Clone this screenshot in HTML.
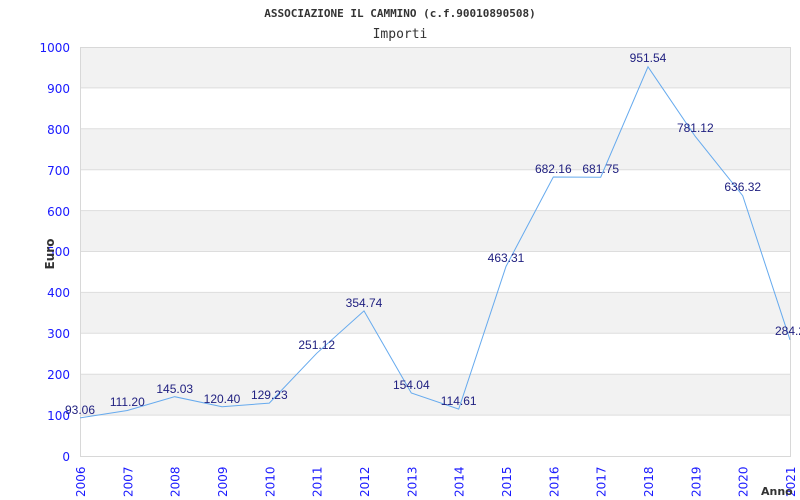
<!DOCTYPE html>
<html><head><style>body{margin:0;background:#fff;overflow:hidden}svg{display:block}</style></head><body>
<svg width="800" height="500" xmlns="http://www.w3.org/2000/svg">
<rect width="800" height="500" fill="#fff"/>
<g fill="#f2f2f2">
<rect x="80" y="47" width="710" height="40.9"/>
<rect x="80" y="128.8" width="710" height="40.9"/>
<rect x="80" y="210.6" width="710" height="40.9"/>
<rect x="80" y="292.4" width="710" height="40.9"/>
<rect x="80" y="374.2" width="710" height="40.9"/>
</g>
<g stroke="#dddddd" stroke-width="1">
<line x1="80" x2="790" y1="87.9" y2="87.9"/><line x1="80" x2="790" y1="128.8" y2="128.8"/>
<line x1="80" x2="790" y1="169.7" y2="169.7"/><line x1="80" x2="790" y1="210.6" y2="210.6"/>
<line x1="80" x2="790" y1="251.5" y2="251.5"/><line x1="80" x2="790" y1="292.4" y2="292.4"/>
<line x1="80" x2="790" y1="333.3" y2="333.3"/><line x1="80" x2="790" y1="374.2" y2="374.2"/>
<line x1="80" x2="790" y1="415.1" y2="415.1"/>
</g>
<rect x="80.5" y="47.5" width="710" height="409" fill="none" stroke="#d8d8d8"/>
<g font-family="'DejaVu Sans Mono',monospace" fill="#333" text-anchor="middle">
<text x="400" y="17" font-size="11" font-weight="bold">ASSOCIAZIONE IL CAMMINO (c.f.90010890508)</text>
<text x="400" y="38" font-size="13">Importi</text>
</g>
<g font-family="'DejaVu Sans',sans-serif" font-size="12" fill="#1a1aff" text-anchor="end">
<text x="70" y="52">1000</text><text x="70" y="93">900</text><text x="70" y="134">800</text>
<text x="70" y="175">700</text><text x="70" y="216">600</text><text x="70" y="256">500</text>
<text x="70" y="297">400</text><text x="70" y="338">300</text><text x="70" y="379">200</text>
<text x="70" y="420">100</text><text x="70" y="461">0</text>
</g>
<text transform="translate(54,254) rotate(-90)" font-family="'DejaVu Sans',sans-serif" font-size="12" font-weight="bold" fill="#333" text-anchor="middle">Euro</text>
<g font-family="'DejaVu Sans',sans-serif" font-size="12" fill="#1a1aff" text-anchor="start">
<text transform="translate(85,497) rotate(-90)">2006</text>
<text transform="translate(132.3,497) rotate(-90)">2007</text>
<text transform="translate(179.7,497) rotate(-90)">2008</text>
<text transform="translate(227,497) rotate(-90)">2009</text>
<text transform="translate(274.3,497) rotate(-90)">2010</text>
<text transform="translate(321.7,497) rotate(-90)">2011</text>
<text transform="translate(369,497) rotate(-90)">2012</text>
<text transform="translate(416.3,497) rotate(-90)">2013</text>
<text transform="translate(463.7,497) rotate(-90)">2014</text>
<text transform="translate(511,497) rotate(-90)">2015</text>
<text transform="translate(558.3,497) rotate(-90)">2016</text>
<text transform="translate(605.7,497) rotate(-90)">2017</text>
<text transform="translate(653,497) rotate(-90)">2018</text>
<text transform="translate(700.3,497) rotate(-90)">2019</text>
<text transform="translate(747.7,497) rotate(-90)">2020</text>
<text transform="translate(795,497) rotate(-90)">2021</text>
</g>
<text x="761" y="495" font-family="'DejaVu Sans',sans-serif" font-size="11" font-weight="bold" fill="#333">Anno</text>
<polyline fill="none" stroke="#66aaee" stroke-width="1" points="80,417.9 127.3,410.5 174.7,396.7 222,406.8 269.3,403.1 316.7,353.3 364,310.9 411.3,393 458.7,409.1 506,266.5 553.3,177 600.7,177.2 648,66.8 695.3,136.5 742.7,195.7 790,339.8"/>
<g font-family="'Liberation Sans',sans-serif" font-size="12" fill="#202080" text-anchor="middle">
<text x="80" y="414">93.06</text><text x="127.3" y="406">111.20</text><text x="174.7" y="393">145.03</text>
<text x="222" y="403">120.40</text><text x="269.3" y="399">129.23</text><text x="316.7" y="349">251.12</text>
<text x="364" y="307">354.74</text><text x="411.3" y="389">154.04</text><text x="458.7" y="405">114.61</text>
<text x="506" y="262">463.31</text><text x="553.3" y="173">682.16</text><text x="600.7" y="173">681.75</text>
<text x="648" y="62">951.54</text><text x="695.3" y="132">781.12</text><text x="742.7" y="191">636.32</text>
<text x="790" y="335">284.2</text>
</g>
</svg>
</body></html>
